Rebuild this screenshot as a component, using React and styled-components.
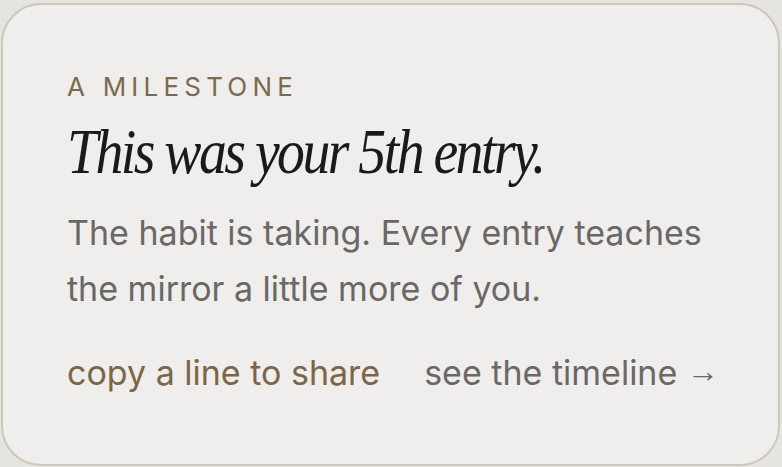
import styled, { createGlobalStyle } from "styled-components";

const GlobalStyle = createGlobalStyle`
  html, body {
    margin: 0;
    padding: 0;
    background: #e6e4e0;
  }
  body {
    font-family: Inter, "Noto Sans", sans-serif;
  }
`;

const App = () => {
  return (
    <>
      <GlobalStyle />
      <Page>
        <Card>
          <Eyebrow>A Milestone</Eyebrow>
          <Headline>
            <span>This was your 5th entry.</span>
          </Headline>
          <Body>
            The habit is taking. Every entry teaches the mirror a little more of
            you.
          </Body>
          <Actions>
            <ActionLink $accent>copy a line to share</ActionLink>
            <ActionLink>
              see the timeline <Arrow>→</Arrow>
            </ActionLink>
          </Actions>
        </Card>
      </Page>
    </>
  );
};

// Styled components
const Page = styled.div`
  width: 782px;
  height: 467px;
  padding: 3px 2px 1px 1px;
  box-sizing: border-box;
  display: flex;
`;

const Card = styled.div`
  flex: 1;
  box-sizing: border-box;
  background: #efeeec;
  border: 2px solid #cdc6ba;
  border-radius: 40px;
  padding: 66px 40px 0 64px;
  display: flex;
  flex-direction: column;
`;

const Eyebrow = styled.div`
  font-size: 26px;
  line-height: 32px;
  letter-spacing: 0.2em;
  text-transform: uppercase;
  color: #7b6a4f;
  font-weight: 400;
`;

const Headline = styled.h1`
  margin: 14px 0 0 0;
  font-family: "Liberation Serif", "DejaVu Serif", serif;
  font-style: italic;
  font-weight: 400;
  font-size: 64px;
  line-height: 70px;
  letter-spacing: -0.045em;
  color: #1c1a18;
  white-space: nowrap;

  span {
    display: inline-block;
    transform: scaleX(0.87);
    transform-origin: left center;
  }
`;

const Body = styled.p`
  margin: 18px 0 0 0;
  max-width: 650px;
  font-size: 34px;
  line-height: 56px;
  color: #6a6866;
`;

const Actions = styled.div`
  margin-top: 34px;
  display: flex;
  gap: 44px;
  align-items: baseline;
`;

const ActionLink = styled.span`
  font-size: 34px;
  line-height: 40px;
  white-space: nowrap;
  color: ${(p) => (p.$accent ? "#7b6647" : "#6a6866")};
  cursor: pointer;
`;

const Arrow = styled.span`
  font-family: "Liberation Sans", Arial, sans-serif;
  font-size: 32px;
  vertical-align: 3px;
`;

export default App;
